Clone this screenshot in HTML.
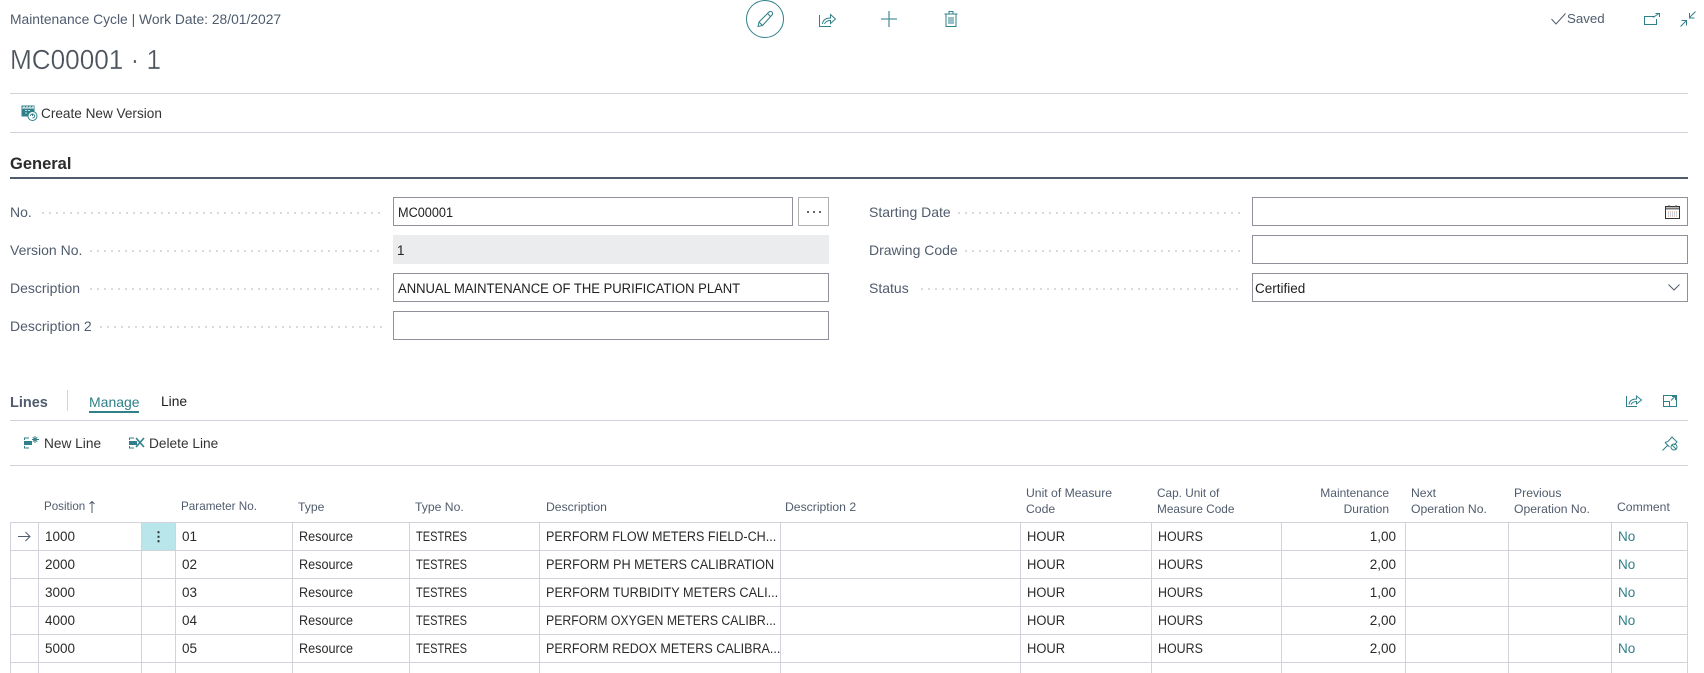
<!DOCTYPE html>
<html><head><meta charset="utf-8"><style>
html,body{margin:0;padding:0;background:#fff;width:1704px;height:673px;overflow:hidden}
body{position:relative;font-family:"Liberation Sans",sans-serif;font-size:14px;color:#212121}
.a{position:absolute;white-space:nowrap}
.l{color:#505c6d}
.hr{position:absolute;left:10px;width:1678px;height:1px;background:#d2d3da}
.inp{position:absolute;box-sizing:border-box;height:29px;border:1px solid #8f929c;line-height:29px;padding-left:4px;font-size:13.5px;background:#fff}
.dots{position:absolute;height:2px;background:repeating-linear-gradient(90deg,#d9dadd 0 2px,transparent 2px 7px)}
svg{position:absolute;overflow:visible;fill:none;stroke:#2f8088;stroke-width:1}
table{position:absolute;left:10px;top:522px;border-collapse:collapse;table-layout:fixed;width:1677px}
td{border:1px solid #d2d3da;height:27px;padding:1px 0 0 6px;font-size:13.5px;line-height:26px;white-space:nowrap;overflow:hidden;box-sizing:border-box;color:#2a2a2a}
td.r{text-align:right;padding:1px 9px 0 0}
td.c{color:#2f8088;padding-top:0}
.h{position:absolute;color:#505c6d;font-size:12.2px;line-height:16px;white-space:nowrap}
.s{display:inline-block;transform-origin:0 50%}
.re{transform:scaleX(.935)}.te{transform:scaleX(.82)}.ho{transform:scaleX(.957)}.hs{transform:scaleX(.92)}
</style></head><body>
<div class="a l" style="left:10px;top:11px;font-size:13.85px;line-height:16px;">Maintenance Cycle | Work Date: 28/01/2027</div>
<div class="a" style="left:10px;top:42px;font-size:27.5px;line-height:36px;color:#4c525c;-webkit-text-stroke:.3px #fff;transform:scaleX(.95);transform-origin:0 50%;">MC00001 · 1</div>

<svg style="left:746px;top:0" width="38" height="38"><circle cx="19" cy="19" r="18.5"/><path d="M12 26.500l1-4.500L23 12c1-1 2.500-.5 3 0s1 2 0 3L16.500 25.500zM13 22l3.500 3.500M21.500 13.500l3 3"/></svg>
<svg style="left:819px;top:11px" width="17" height="16"><path d="M.5 4v11.500h11.500M3.500 13c.5-4 3-6 8-6V3.500l5 4.500-5 4.500V9.500c-3 0-5 .8-6 3.500"/></svg>
<svg style="left:881px;top:11px" width="16" height="16"><path d="M8 0v16M0 8h16" stroke="#4f959c" stroke-width="1.300"/></svg>
<svg style="left:944px;top:11px" width="14" height="16"><path d="M.5 3h13M5 3V.5h4V3M2 3v12.500h10V3M5 6v7M7 6v7M9 6v7"/></svg>
<svg style="left:1551px;top:13px" width="15" height="12"><path d="M.5 6l4.500 5L14.500.5" stroke="#505c6d"/></svg>
<div class="a l" style="left:1567px;top:11px;line-height:16px;font-size:13.3px;">Saved</div>
<svg style="left:1644px;top:13px" width="16" height="12"><path d="M11 3.500H.5v8h12V6M9 4.500L15 .5M11.500.5H15.500V4"/></svg>
<svg style="left:1680px;top:11px" width="16" height="16"><path d="M.5 15.500l6-6M1.500 9.500h5v5M15.500.5l-6 6M9.500 2v5h5"/></svg>

<div class="hr" style="top:93px"></div>
<svg style="left:21px;top:105px" width="17" height="16"><rect x=".5" y=".5" width="13" height="11" fill="#2f8088" stroke="none"/><path d="M1 3h12M3 1v1.500M6 1v1.500M9 1v1.500M12 1v1.500" stroke="#fff"/><path d="M4 5.500h2M7 5.500h2M4 8h2" stroke="#bcdfe2"/><circle cx="11.500" cy="11" r="4.500" fill="#fff" stroke="#2f8088"/><path d="M9.500 11a2 2 0 1 1 2 2M11.500 9v2" stroke="#2f8088"/></svg>
<div class="a" style="left:41px;top:106px;line-height:16px;color:#333;font-size:13.6px;">Create New Version</div>
<div class="hr" style="top:132px"></div>

<div class="a" style="left:10px;top:154px;font-size:16.5px;font-weight:bold;line-height:20px;color:#2b2b2b;">General</div>
<div class="a" style="left:10px;top:177px;width:1678px;height:2px;background:#505c6d"></div>

<div class="a l" style="left:10px;top:204px;line-height:16px">No.</div>
<div class="dots" style="left:42px;width:338px;top:212px"></div>
<div class="a l" style="left:10px;top:242px;line-height:16px">Version No.</div>
<div class="dots" style="left:90px;width:290px;top:250px"></div>
<div class="a l" style="left:10px;top:280px;line-height:16px">Description</div>
<div class="dots" style="left:90px;width:290px;top:288px"></div>
<div class="a l" style="left:10px;top:318px;line-height:16px">Description 2</div>
<div class="dots" style="left:100px;width:284px;top:326px"></div>

<div class="inp" style="left:393px;top:197px;width:400px"><span class="s" style="transform:scaleX(.94)">MC00001</span></div>
<div class="inp" style="left:798px;top:197px;width:31px;border-color:#b0b0b3;"></div>
<div class="a" style="left:807px;top:211px;width:2px;height:2px;background:#666"></div>
<div class="a" style="left:813px;top:211px;width:2px;height:2px;background:#666"></div>
<div class="a" style="left:819px;top:211px;width:2px;height:2px;background:#666"></div>
<div class="inp" style="left:393px;top:235px;width:436px;background:#ebecee;border-color:#ebecee;padding-left:3px">1</div>
<div class="inp" style="left:393px;top:273px;width:436px"><span class="s" style="transform:scaleX(.965)">ANNUAL MAINTENANCE OF THE PURIFICATION PLANT</span></div>
<div class="inp" style="left:393px;top:311px;width:436px"></div>

<div class="a l" style="left:869px;top:204px;line-height:16px">Starting Date</div>
<div class="dots" style="left:958px;width:283px;top:212px"></div>
<div class="a l" style="left:869px;top:242px;line-height:16px">Drawing Code</div>
<div class="dots" style="left:965px;width:276px;top:250px"></div>
<div class="a l" style="left:869px;top:280px;line-height:16px">Status</div>
<div class="dots" style="left:921px;width:320px;top:288px"></div>

<div class="inp" style="left:1252px;top:197px;width:436px"></div>
<svg style="left:1665px;top:204px" width="15" height="15"><rect x=".5" y="2.500" width="14" height="12" stroke="#333"/><path d="M1 4.500h13" stroke="#777" stroke-width="2"/><path d="M4 1v2M11 1v2" stroke="#555"/><path d="M3 8h9" stroke="#c59a8c" stroke-dasharray="1 1"/><path d="M3 10h9" stroke="#8fa0c8" stroke-dasharray="1 1"/><path d="M3 12h9" stroke="#c59a8c" stroke-dasharray="1 1"/></svg>
<div class="inp" style="left:1252px;top:235px;width:436px"></div>
<div class="inp" style="left:1252px;top:273px;width:436px;padding-left:2px;">Certified</div>
<svg style="left:1668px;top:284px" width="12" height="7"><path d="M.5.500L6 6l5.500-5.500" stroke="#505c6d"/></svg>

<div class="a l" style="left:10px;top:394px;font-size:14.5px;font-weight:bold;line-height:18px;">Lines</div>
<div class="a" style="left:67px;top:390px;width:1px;height:21px;background:#d2d3da"></div>
<div class="a" style="left:89px;top:394px;line-height:16px;color:#2f8088;">Manage</div>
<div class="a" style="left:89px;top:411px;width:50px;height:2px;background:#2f8088"></div>
<div class="a" style="left:161px;top:394px;line-height:16px;font-size:13.8px;">Line</div>
<svg style="left:1626px;top:393px" width="16" height="14"><path d="M.5 3v10.500h10.500M3 11.500c.5-4 3-5.500 7.500-5.500V3l5 4-5 4V8.500c-3 0-4.500 1-5.500 3"/></svg>
<svg style="left:1663px;top:395px" width="14" height="12"><path d="M.5.500h13v11H.5zM.5 6.500h6v5M8 5.500l4-4M9 1.500h3.500V5"/></svg>
<div class="hr" style="top:420px"></div>

<svg style="left:24px;top:436px" width="16" height="14"><path d="M5 2H.5v2M.5 10v2H5"/><rect x="0" y="5" width="8" height="4" fill="#2f8088" stroke="none"/><path d="M11 0v7M8 3.500h7M8.800 1.200l4.500 4.500M13.300 1.200L8.800 5.700"/></svg>
<div class="a" style="left:44px;top:436px;line-height:16px;color:#333;font-size:13.7px;">New Line</div>
<svg style="left:129px;top:436px" width="16" height="14"><path d="M5 2H.5v2M.5 10v2H5"/><rect x="0" y="5" width="8" height="4" fill="#2f8088" stroke="none"/><path d="M7 2l8 9M15 2l-8 9" stroke-width="1.600"/></svg>
<div class="a" style="left:149px;top:436px;line-height:16px;color:#333;font-size:13.7px;">Delete Line</div>
<svg style="left:1662px;top:436px" width="16" height="15"><path d="M.5 14.500l5-5M3 6.500l3-1 4-4.500 5 5-3 3M3 6.500l4.500 4.500"/><circle cx="12" cy="11" r="3"/><path d="M10 9l4 4"/></svg>
<div class="hr" style="top:465px"></div>

<div class="h" style="left:44px;top:499px;font-size:11.6px">Position</div>
<svg style="left:89px;top:501px" width="6" height="12"><path d="M3 12V.5M.5 3L3 .5 5.500 3" stroke="#505c6d"/></svg>
<div class="h" style="left:181px;top:499px;font-size:11.7px">Parameter No.</div>
<div class="h" style="left:298px;top:499px">Type</div>
<div class="h" style="left:415px;top:499px">Type No.</div>
<div class="h" style="left:546px;top:499px">Description</div>
<div class="h" style="left:785px;top:499px">Description 2</div>
<div class="h" style="left:1026px;top:485px">Unit of Measure<br>Code</div>
<div class="h" style="left:1157px;top:485px;font-size:11.8px">Cap. Unit of<br>Measure Code</div>
<div class="h" style="left:1300px;top:485px;width:89px;text-align:right;font-size:12px">Maintenance<br>Duration</div>
<div class="h" style="left:1411px;top:485px">Next<br>Operation No.</div>
<div class="h" style="left:1514px;top:485px">Previous<br>Operation No.</div>
<div class="h" style="left:1617px;top:499px">Comment</div>

<table>
<colgroup><col style="width:28px"><col style="width:103px"><col style="width:34px"><col style="width:117px"><col style="width:117px"><col style="width:130px"><col style="width:241px"><col style="width:240px"><col style="width:131px"><col style="width:130px"><col style="width:124px"><col style="width:103px"><col style="width:103px"><col style="width:76px"></colgroup>
<tr><td></td><td>1000</td><td style="background:#b8e6ea;padding:0;text-align:center;font-weight:bold;">⋮</td><td>01</td><td><span class="s re">Resource</span></td><td><span class="s te">TESTRES</span></td><td><span class="s" style="transform:scaleX(.93)">PERFORM FLOW METERS FIELD-CH...</span></td><td></td><td><span class="s ho">HOUR</span></td><td><span class="s hs">HOURS</span></td><td class="r">1,00</td><td></td><td></td><td class="c">No</td></tr>
<tr><td></td><td>2000</td><td></td><td>02</td><td><span class="s re">Resource</span></td><td><span class="s te">TESTRES</span></td><td><span class="s" style="transform:scaleX(.94)">PERFORM PH METERS CALIBRATION</span></td><td></td><td><span class="s ho">HOUR</span></td><td><span class="s hs">HOURS</span></td><td class="r">2,00</td><td></td><td></td><td class="c">No</td></tr>
<tr><td></td><td>3000</td><td></td><td>03</td><td><span class="s re">Resource</span></td><td><span class="s te">TESTRES</span></td><td><span class="s" style="transform:scaleX(.94)">PERFORM TURBIDITY METERS CALI...</span></td><td></td><td><span class="s ho">HOUR</span></td><td><span class="s hs">HOURS</span></td><td class="r">1,00</td><td></td><td></td><td class="c">No</td></tr>
<tr><td></td><td>4000</td><td></td><td>04</td><td><span class="s re">Resource</span></td><td><span class="s te">TESTRES</span></td><td><span class="s" style="transform:scaleX(.91)">PERFORM OXYGEN METERS CALIBR...</span></td><td></td><td><span class="s ho">HOUR</span></td><td><span class="s hs">HOURS</span></td><td class="r">2,00</td><td></td><td></td><td class="c">No</td></tr>
<tr><td></td><td>5000</td><td></td><td>05</td><td><span class="s re">Resource</span></td><td><span class="s te">TESTRES</span></td><td><span class="s" style="transform:scaleX(.93)">PERFORM REDOX METERS CALIBRA...</span></td><td></td><td><span class="s ho">HOUR</span></td><td><span class="s hs">HOURS</span></td><td class="r">2,00</td><td></td><td></td><td class="c">No</td></tr>
<tr><td></td><td></td><td></td><td></td><td></td><td></td><td></td><td></td><td></td><td></td><td></td><td></td><td></td><td></td></tr>
</table>
<svg style="left:18px;top:531px" width="13" height="11"><path d="M0 5.500h12M7.500 1l4.500 4.500L7.500 10" stroke="#505c6d"/></svg>
</body></html>
